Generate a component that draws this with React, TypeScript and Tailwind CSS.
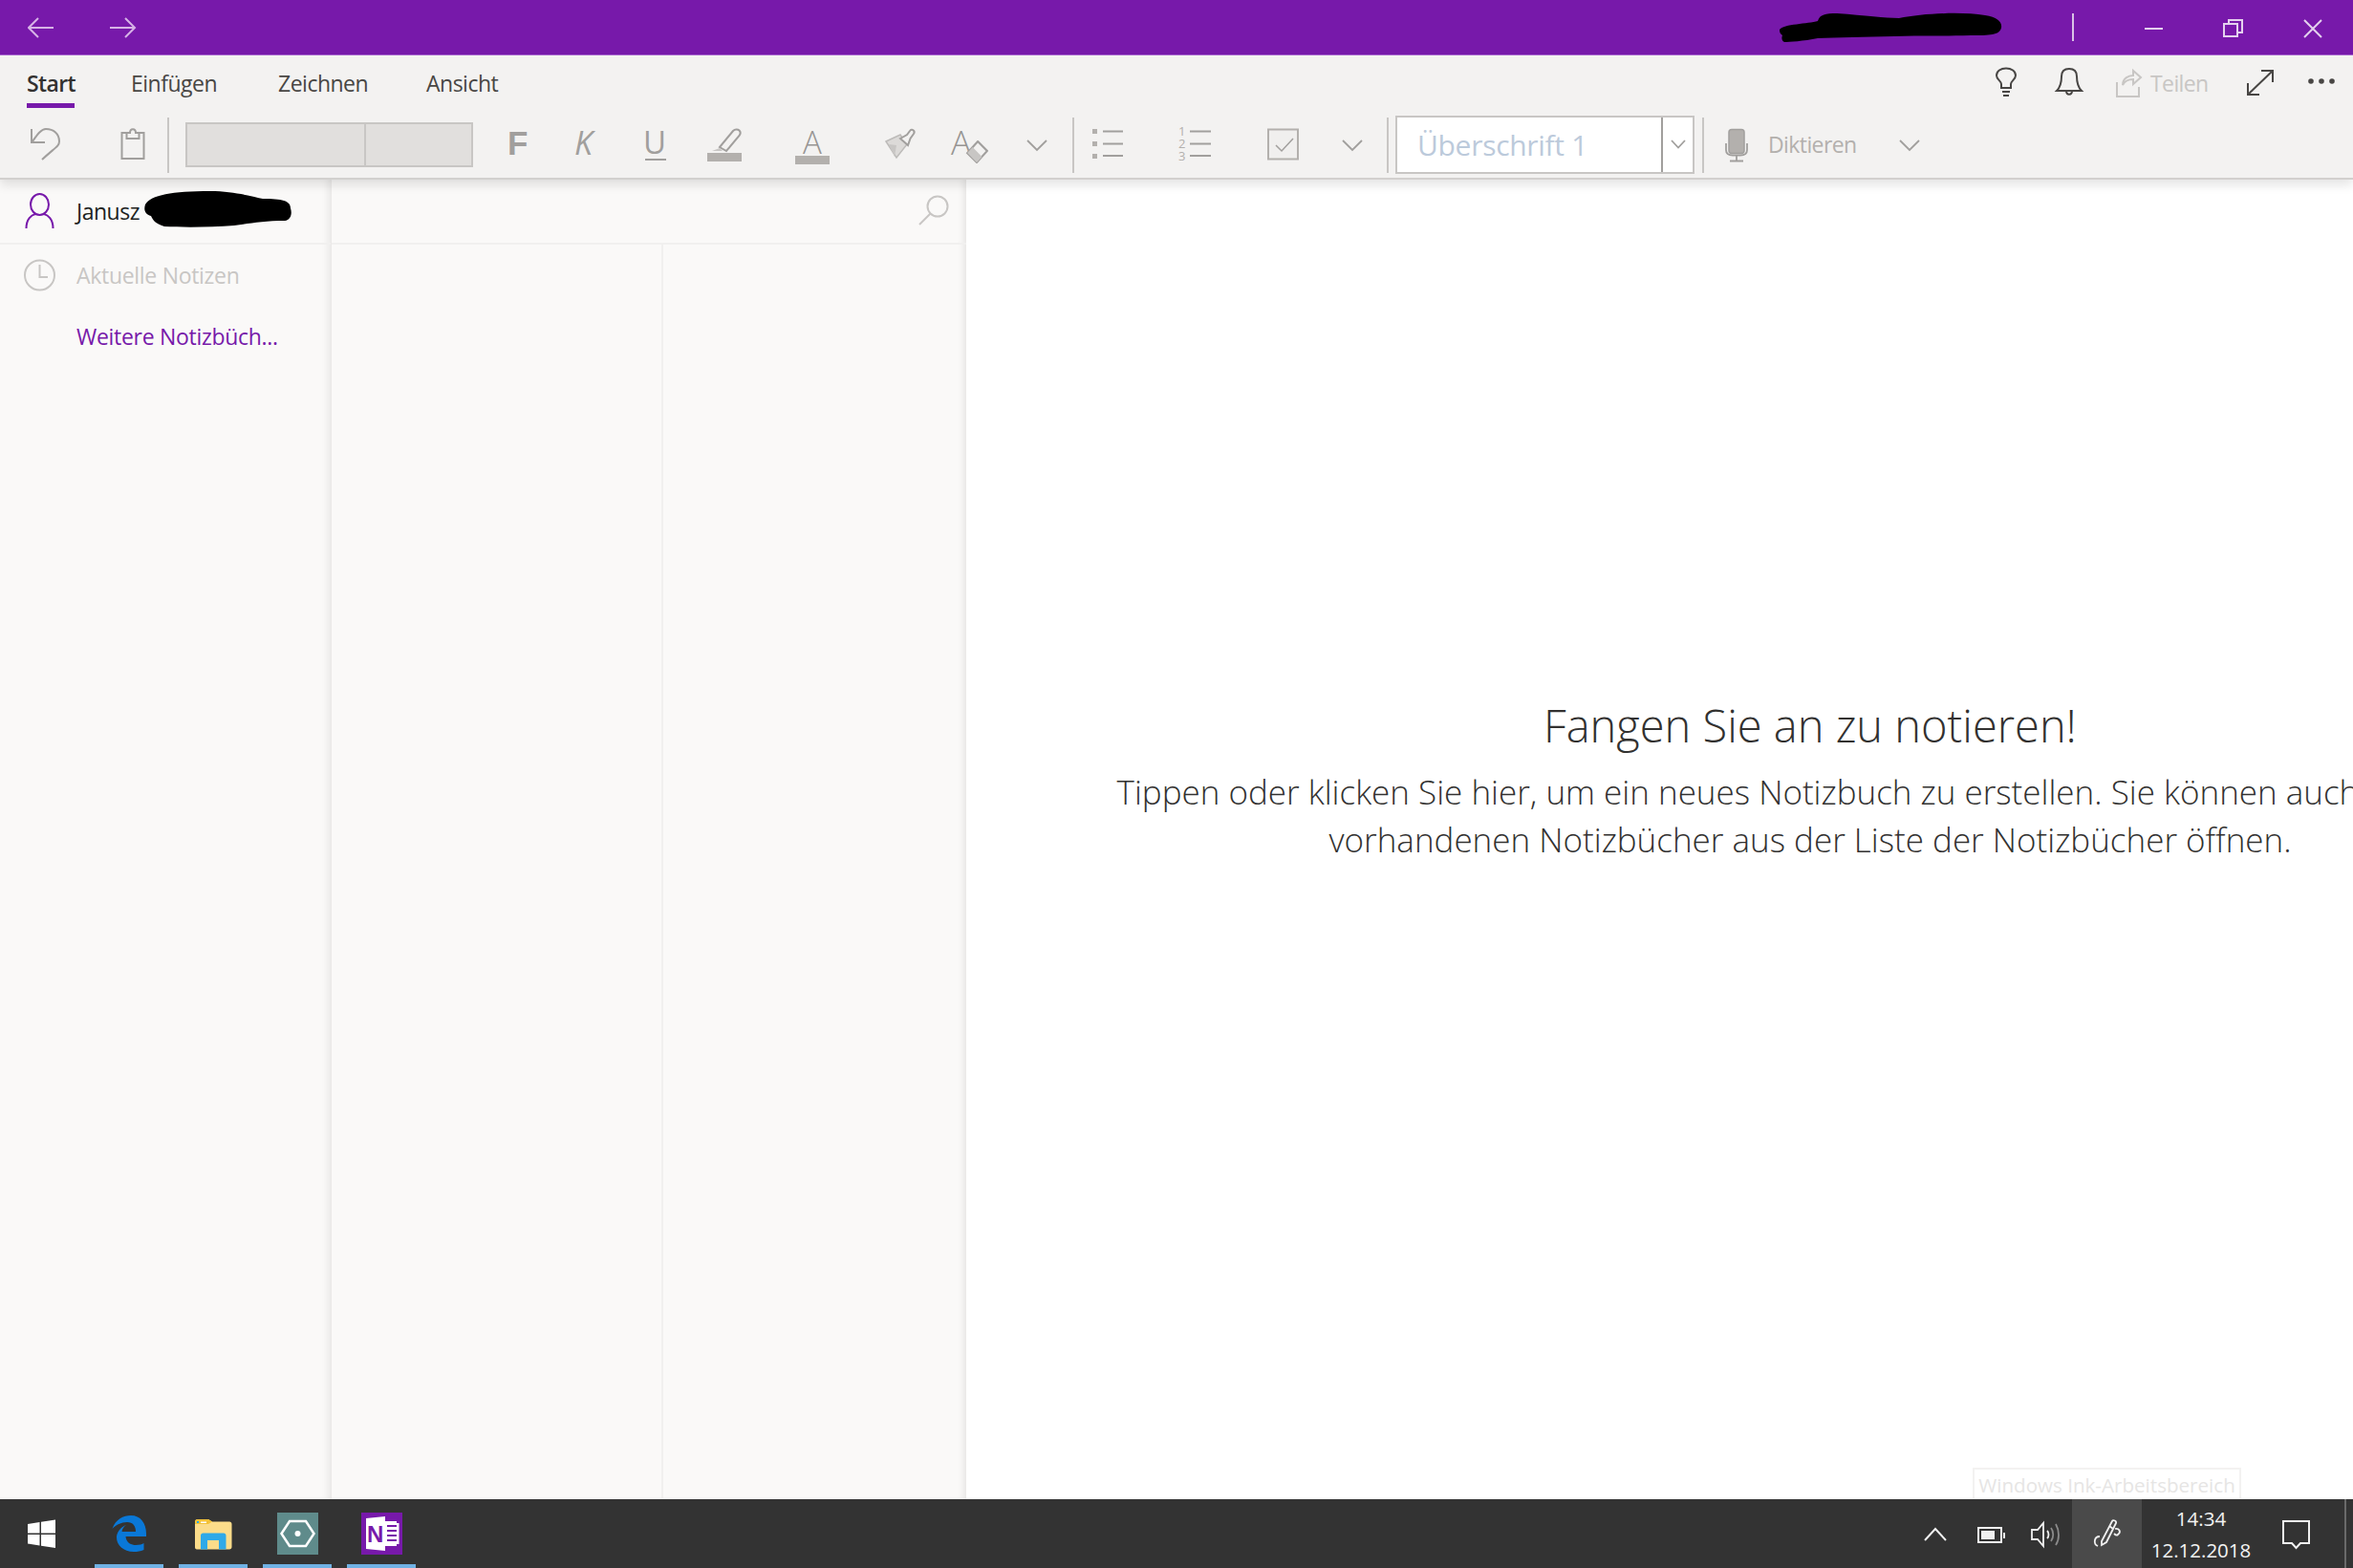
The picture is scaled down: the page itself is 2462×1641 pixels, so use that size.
import React from "react";

const UI = "'Open Sans','Noto Sans',sans-serif";
const G = "#a19f9d";

function Ico({ x, y, w, h, className = "", children }: { x: number; y: number; w: number; h: number; className?: string; children: React.ReactNode }) {
  return (
    <svg width={w} height={h} viewBox={`${x} ${y} ${w} ${h}`} fill="none" className={`shrink-0 block ${className}`}>
      {children}
    </svg>
  );
}

const Chev = ({ x, className = "" }: { x: number; className?: string }) => (
  <Ico x={x} y={132} w={22} h={40} className={className}>
    <path d={`M${x + 1} 147 L${x + 11} 157 L${x + 21} 147`} stroke={G} strokeWidth="1.8" />
  </Ico>
);

const Sep = ({ className = "" }: { className?: string }) => <div className={`w-[2px] h-[58px] bg-[#c8c6c4] shrink-0 ${className}`} />;

export default function App() {
  return (
    <div className="w-full h-screen overflow-hidden flex flex-col bg-white" style={{ fontFamily: UI }}>
      {/* Title bar */}
      <div className="h-[58px] shrink-0 bg-[#7719aa] border-b border-[#a865cf] flex items-center">
        <Ico x={29} y={14} w={114} h={28} className="ml-[29px]">
          <g stroke="#d6b3e6" strokeWidth="2" fill="none">
            <path d="M56 28 H30 M40 18 L30 28 L40 38" />
            <path d="M115 28 H141 M131 18 L141 28 L131 38" />
          </g>
        </Ico>
        <svg width="233" height="32" viewBox="0 0 233 32" className="ml-[1719px] shrink-0 block">
          <path d="M0 18 C4 12 30 12 40 9 C42 2 48 1 60 1 C90 3 110 6 125 6 C150 1 190 -1 215 3 C228 5 233 10 232 16 C230 24 220 24 200 24 C170 25 150 24 120 25 C90 26 60 26 40 27 C25 30 10 31 5 31 C2 30 2 26 3 24 C0 22 0 20 0 18 Z" fill="#000" />
        </svg>
        <div className="ml-[73px] w-[2px] h-[29px] bg-[#d9c2e6] shrink-0" />
        <Ico x={2240} y={14} w={200} h={28} className="ml-[68px]">
          <g stroke="#e4d1ee" strokeWidth="2" fill="none">
            <path d="M2246 29 H2265" />
            <path d="M2329 24 H2343 V37 H2329 Z M2334 24 V20 H2348 V33 H2343" />
            <path d="M2413 20 L2431 38 M2431 20 L2413 38" />
          </g>
        </Ico>
      </div>

      {/* Ribbon */}
      <div className="relative z-10 h-[130px] shrink-0 bg-[#f3f2f1] border-b-2 border-[#d2d0ce] shadow-[0_6px_10px_rgba(0,0,0,0.10)] flex flex-col">
        <div className="h-[58px] flex items-start text-[23px] leading-[30px] text-[#484644]">
          <div className="ml-[28px] w-[50px] flex flex-col mt-[14px]">
            <span className="font-semibold whitespace-nowrap text-[#323130] tracking-[-0.6px]">Start</span>
            <div className="mt-[6px] h-[5px] bg-[#7719aa]" />
          </div>
          <span className="ml-[59px] w-[91px] mt-[14px] whitespace-nowrap tracking-[-0.5px]">Einfügen</span>
          <span className="ml-[63px] w-[94px] mt-[14px] whitespace-nowrap tracking-[-0.5px]">Zeichnen</span>
          <span className="ml-[61px] w-[76px] mt-[14px] whitespace-nowrap tracking-[-0.5px]">Ansicht</span>
          <Ico x={2085} y={58} w={97} h={58} className="ml-[1563px]">
            <g stroke="#484644" strokeWidth="2" fill="none">
              <path d="M2094 92 V88 C2094 85 2089 83 2089 79 C2089 74.500 2093.500 71.500 2099 71.500 C2104.500 71.500 2109 74.500 2109 79 C2109 83 2104 85 2104 88 V92 Z M2095 96 H2103 M2096 100 H2102" />
              <path d="M2152 95 C2156 91 2157 87 2157 80 C2157 75 2160 72 2165 72 C2170 72 2173 75 2173 80 C2173 87 2174 91 2178 95 Z M2162 95 C2162 100 2168 100 2168 95" />
            </g>
          </Ico>
          <Ico x={2215} y={70} w={28} h={34} className="ml-[32px] mt-[12px]">
            <g stroke="#c8c6c4" strokeWidth="2" fill="none">
              <path d="M2216 86 V101 H2239 V91" />
              <path d="M2222 89 C2222 82 2228 79 2233 79 V74 L2241 81 L2233 88 V83 C2228 83 2224 85 2222 89 Z" />
            </g>
          </Ico>
          <span className="ml-[8px] w-[60px] mt-[14px] text-[#c8c6c4] whitespace-nowrap tracking-[-0.6px]">Teilen</span>
          <Ico x={2350} y={58} w={94} h={58} className="ml-[40px]">
            <g stroke="#484644" strokeWidth="2" fill="none">
              <path d="M2352 99 L2378 74 M2366 74 H2378 V86 M2352 87 V99 H2364" />
            </g>
            <g fill="#484644">
              <circle cx="2418" cy="85" r="2.800" />
              <circle cx="2429" cy="85" r="2.800" />
              <circle cx="2440" cy="85" r="2.800" />
            </g>
          </Ico>
        </div>
        <div className="h-[72px] -mb-[2px] flex items-start">
          <div className="h-[72px] flex items-center">
            <Ico x={31} y={132} w={33} h={40} className="ml-[31px]">
              <g stroke={G} strokeWidth="2" fill="none">
                <path d="M33 135 V149 H47" />
                <path d="M34 148 C39 141 43 135 48 135 C56 135 62 140 62 148 C62 153 58 154 44 167" />
              </g>
            </Ico>
            <Ico x={126} y={132} w={27} h={40} className="ml-[62px]">
              <g stroke={G} strokeWidth="2" fill="none">
                <path d="M133 139 H127.500 V166 H150.500 V139 H145" />
                <path d="M132.500 145 V139 H136 C136 134 142 134 142 139 H145.500 V145 Z" />
              </g>
            </Ico>
            <Sep className="ml-[22px]" />
            <div className="ml-[17px] w-[301px] h-[47px] -mt-[2px] bg-[#e1dfdd] border-2 border-[#c8c6c4] flex shrink-0">
              <div className="w-[187px] h-full border-r-2 border-[#c8c6c4]" />
            </div>
            <span className="ml-[36px] w-[20px] shrink-0 text-[35px] leading-[40px] font-bold text-[#a19f9d] -translate-y-[2px]" style={{ fontFamily: "'Liberation Sans',sans-serif" }}>F</span>
            <span className="ml-[50px] w-[24px] shrink-0 text-[34px] leading-[40px] italic text-[#a19f9d] -translate-y-[3px]">K</span>
            <div className="relative ml-[48px] w-[27px] h-[40px] shrink-0">
              <span className="block text-[33px] leading-[40px] text-[#a19f9d] -translate-y-[3px]">U</span>
              <div className="absolute left-[2px] top-[34px] w-[22px] h-[2px] bg-[#a19f9d]" />
            </div>
            <Ico x={738} y={132} w={40} h={40} className="ml-[38px]">
              <rect x="740" y="160" width="36" height="9" fill="#b3b0ad" />
              <path d="M753 154 L767 137 C769 135 772 135 773.500 136.500 C775 138 775 140 773.500 142 L760 158 Z" stroke={G} strokeWidth="2" />
              <path d="M753 155 L745 158 H756 Z" fill="#c8c6c4" />
            </Ico>
            <div className="ml-[54px] w-[36px] h-[37px] mt-[2px] flex flex-col items-center shrink-0">
              <span className="text-[33px] leading-[28px] font-light text-[#979593]">A</span>
              <div className="mt-auto w-full h-[9px] bg-[#b3b0ad]" />
            </div>
            <Ico x={924} y={132} w={36} h={40} className="ml-[56px]">
              <path d="M927 148 L942 141 L949 151 L938 165 Z" fill="#dcdad8" stroke="#bdbbb9" strokeWidth="1.500" />
              <path d="M942 145 L949 141 L952 137 C954 134 958 137 956 140 L952.500 145 L950 152 Z" stroke={G} strokeWidth="2" fill="#f3f2f1" />
              <path d="M938 152 L936 164 L930 151 Z" fill="#c8c6c4" />
            </Ico>
            <div className="ml-[35px] w-[38px] h-[40px] flex items-start shrink-0 relative">
              <span className="text-[35px] leading-[32px] font-light text-[#979593] mt-[1px]">A</span>
              <svg width="24" height="24" viewBox="0 0 22 22" fill="none" className="absolute right-[-1px] bottom-[1px]">
                <path d="M12 1 L21 10 L11 21 L2 12 Z" fill="#f3f2f1" stroke={G} strokeWidth="2" />
                <path d="M2 12 L7 6.500 L16 15.500 L11 21 Z" fill="#c8c6c4" />
              </svg>
            </div>
            <Chev x={1074} className="ml-[41px]" />
            <Sep className="ml-[26px]" />
            <Ico x={1143} y={132} w={33} h={40} className="ml-[19px]">
              <g fill="#b3b0ad">
                <rect x="1143" y="135" width="5" height="5" />
                <rect x="1143" y="148" width="5" height="5" />
                <rect x="1143" y="161" width="5" height="5" />
              </g>
              <path d="M1154 137.500 H1175 M1154 150.500 H1175 M1154 163 H1175" stroke={G} strokeWidth="2" />
            </Ico>
            <div className="ml-[57px] w-[12px] -mt-[4px] flex flex-col text-[13px] leading-[13px] text-[#b3b0ad] shrink-0">
              <span>1</span>
              <span>2</span>
              <span>3</span>
            </div>
            <Ico x={1245} y={132} w={24} h={40}>
              <path d="M1245 137.500 H1267 M1245 150.500 H1267 M1245 163 H1267" stroke={G} strokeWidth="2" />
            </Ico>
            <Ico x={1326} y={132} w={34} h={40} className="ml-[57px]">
              <rect x="1327" y="135.500" width="31" height="31" stroke="#b3b0ad" strokeWidth="2" fill="#f0efee" />
              <path d="M1335 152 L1341 158 L1353 145" stroke={G} strokeWidth="1.500" />
            </Ico>
            <Chev x={1404} className="ml-[44px]" />
            <Sep className="ml-[25px]" />
            <div className="ml-[7px] w-[313px] h-[61px] -mt-[2px] bg-white border-2 border-[#c8c6c4] flex shrink-0">
              <span className="ml-[21px] w-[255px] text-[30px] leading-[57px] text-[#bccadb] whitespace-nowrap tracking-[-0.3px]">Überschrift 1</span>
              <div className="border-l-2 border-[#a19f9d] flex-1 flex items-center justify-center">
                <svg width="16" height="10" viewBox="0 0 16 10" fill="none"><path d="M1 1 L8 8.500 L15 1" stroke={G} strokeWidth="1.800" /></svg>
              </div>
            </div>
            <Sep className="ml-[8px]" />
            <Ico x={1803} y={132} w={28} h={40} className="ml-[20px]">
              <rect x="1809" y="135.500" width="16" height="25" rx="3" fill="#b3b0ad" stroke={G} strokeWidth="1.500" />
              <path d="M1806 150 V157 C1806 161 1809 162.500 1813 162.500 H1821 C1825 162.500 1828 161 1828 157 V150 M1817 163 V168 M1810 168.500 H1824" stroke={G} strokeWidth="1.800" />
            </Ico>
            <span className="ml-[19px] w-[93px] -mt-[3px] text-[23px] leading-[30px] text-[#b3b0ad] whitespace-nowrap tracking-[-0.6px] shrink-0">Diktieren</span>
            <Chev x={1987} className="ml-[44px]" />
          </div>
        </div>
      </div>

      {/* Body */}
      <div className="flex-1 flex min-h-0">
        <aside className="w-[347px] shrink-0 bg-[#faf9f8] border-r border-[#ebe9e8] shadow-[inset_-7px_0_7px_-4px_rgba(0,0,0,0.07)] flex flex-col">
          <div className="h-[68px] shrink-0 border-b-2 border-[#f1f0ef] flex items-center relative">
            <Ico x={25} y={200} w={34} h={40} className="ml-[25px]">
              <g stroke="#7719aa" strokeWidth="2" fill="none">
                <ellipse cx="41.500" cy="213" rx="9.500" ry="11" />
                <path d="M27.500 238 C27.500 228 33 224 37 223 M55.500 238 C55.500 228 50 224 46 223" />
              </g>
            </Ico>
            <span className="ml-[21px] text-[23px] leading-[30px] text-[#201f1e] whitespace-nowrap tracking-[-0.5px]">Janusz</span>
            <svg width="156" height="38" viewBox="0 0 156 38" className="absolute left-[150px] top-[12px]">
              <path d="M2 14 C8 4 30 0 70 0 C95 0 115 6 125 8 C145 8 154 10 154 18 C156 24 154 30 148 31 C125 31 110 34 95 36 C70 38 40 38 22 37 C12 34 10 30 8 26 C2 24 0 20 2 14 Z" fill="#000" />
            </svg>
          </div>
          <div className="mt-[15px] h-[34px] flex items-center">
            <Ico x={24} y={271} w={36} h={34} className="ml-[24px]">
              <circle cx="41.500" cy="288" r="15.500" stroke="#c8c6c4" strokeWidth="2" />
              <path d="M41.500 277 V290 H50" stroke="#c8c6c4" strokeWidth="2" />
            </Ico>
            <span className="ml-[20px] text-[23px] leading-[30px] text-[#c8c6c4] whitespace-nowrap tracking-[-0.3px]">Aktuelle Notizen</span>
          </div>
          <span className="ml-[80px] mt-[30px] text-[23px] leading-[34px] text-[#7719aa] whitespace-nowrap tracking-[-0.3px]">Weitere Notizbüch...</span>
        </aside>

        <section className="w-[664px] shrink-0 bg-[#faf9f8] shadow-[inset_-7px_0_7px_-4px_rgba(0,0,0,0.08)] flex flex-col">
          <div className="h-[68px] shrink-0 border-b-2 border-[#f1f0ef] flex items-center justify-end pr-[18px]">
            <svg width="34" height="34" viewBox="0 0 34 34" fill="none">
              <circle cx="22" cy="12" r="10.500" stroke="#c8c6c4" strokeWidth="2" />
              <path d="M14.500 19.500 L3 31" stroke="#c8c6c4" strokeWidth="2" />
            </svg>
          </div>
          <div className="flex-1 flex">
            <div className="w-[347px] border-r-2 border-[#f1f0ef]" />
          </div>
        </section>

        <main className="relative flex-1 bg-white overflow-hidden">
          <div className="w-[1766px] pt-[541px] flex flex-col items-center text-center text-[#323130]">
            <h1 className="text-[47px] leading-[60px] font-light whitespace-nowrap">Fangen Sie an zu notieren!</h1>
            <p className="mt-[15px] text-[35px] leading-[50px] font-light whitespace-nowrap">
              Tippen oder klicken Sie hier, um ein neues Notizbuch zu erstellen. Sie können auch <span className="tracking-[-1px]">eine Ihrer</span>
              <br />
              vorhandenen Notizbücher aus der Liste der Notizbücher öffnen.
            </p>
          </div>
          <div className="absolute bottom-0 right-[117px] w-[281px] h-[33px] border-2 border-b-0 border-[#f3f2f1] flex items-center justify-center text-[20.6px] leading-[30px] text-[#e6e5e4] whitespace-nowrap">
            Windows Ink-Arbeitsbereich
          </div>
        </main>
      </div>

      {/* Taskbar */}
      <div className="h-[72px] shrink-0 bg-[#333333] flex items-stretch">
        <Ico x={29} y={1569} w={30} h={72} className="ml-[29px]">
          <g fill="#fff">
            <path d="M29 1595 L41.500 1593 V1604.500 H29 Z" />
            <path d="M43 1592.800 L58 1590.500 V1604.500 H43 Z" />
            <path d="M29 1606 H41.500 V1617.500 L29 1615.500 Z" />
            <path d="M43 1606 H58 V1620 L43 1617.800 Z" />
          </g>
        </Ico>
        <div className="ml-[40px] w-[72px] border-b-4 border-[#6fb1e4] flex items-center justify-center">
          <svg width="36" height="38" viewBox="0 0 36 38" className="mt-[4px]">
            <path d="M0.500 14 C4 4 12 0 20 0 C30 0 36 8 36 19 V22 H14.500 C15 29 21 31 25 31 C29 31 32 30 33.500 29 V36 C30 37.500 27 38 23 38 C12 38 5 31 5 23 C5 18 9 12 15 10 C12 12 11 14 10.500 17 H25 C25 11 22 7 16 7 C10 7 4 10 0.500 14 Z" fill="#0a78d7" />
          </svg>
        </div>
        <div className="ml-[16px] w-[72px] border-b-4 border-[#6fb1e4] flex items-center justify-center">
          <svg width="40" height="33" viewBox="0 0 40 33" className="mt-[4px]">
            <path d="M1 4 C1 2 2 1 4 1 H15 L19 3.500 H37 C38.500 3.500 39.500 4.500 39.500 6 V30 C39.500 31.500 38.500 32.500 37 32.500 H3 C1.500 32.500 1 31.500 1 30 Z" fill="#fbdc8a" />
            <path d="M1 4 C1 2 2 1 4 1 H15 L19 3.500 L15 6 H1 Z" fill="#f2c138" />
            <rect x="3" y="3" width="2" height="2" fill="#2aa8e6" />
            <rect x="7" y="3.500" width="6" height="1.500" fill="#fff" />
            <path d="M7 32.500 V18 C7 16.500 8 15.500 9.500 15.500 H31 C32.500 15.500 33.500 16.500 33.500 18 V32.500 H26 V23 H14 V32.500 Z" fill="#2fa9e8" />
          </svg>
        </div>
        <div className="ml-[16px] w-[72px] border-b-4 border-[#6fb1e4] flex items-center justify-center">
          <svg width="43" height="44" viewBox="0 0 43 44" className="mt-[4px]">
            <rect width="43" height="44" fill="#5f8b8b" />
            <path d="M13 9 H30 L38.500 22 L30 35 H13 L4.500 22 Z" fill="none" stroke="#fff" strokeWidth="2.500" />
            <circle cx="21.500" cy="22" r="3" fill="#fff" />
          </svg>
        </div>
        <div className="ml-[16px] w-[72px] border-b-4 border-[#6fb1e4] flex items-center justify-center">
          <svg width="43" height="44" viewBox="0 0 43 44" className="mt-[4px]">
            <rect width="43" height="44" fill="#7719aa" />
            <path d="M5 6 L25 4 V40 L5 38 Z" fill="#fff" />
            <rect x="25" y="9" width="12" height="26" fill="#fff" />
            <rect x="37" y="11" width="2.500" height="22" fill="#fff" />
            <path d="M27 14 H37 M27 19 H37 M27 24 H37 M27 29 H37" stroke="#7719aa" strokeWidth="2" />
            <text x="6" y="31" fontFamily="'Liberation Sans',sans-serif" fontWeight="700" fontSize="24" fill="#7719aa">N</text>
          </svg>
        </div>
        <Ico x={2010} y={1569} w={150} h={72} className="ml-[1575px]">
          <g stroke="#f0f0f0" strokeWidth="2" fill="none">
            <path d="M2014 1612 L2025 1600 L2036 1612" />
            <rect x="2070" y="1599" width="24" height="15" />
            <path d="M2097 1604 V1610" />
            <path d="M2126 1601 H2132 L2138 1594 V1618 L2132 1611 H2126 Z" strokeWidth="1.800" />
            <path d="M2142 1602 C2144 1604 2144 1608 2142 1610" strokeWidth="1.800" />
          </g>
          <rect x="2073" y="1602" width="14" height="9" fill="#f0f0f0" />
          <path d="M2146 1599 C2149 1603 2149 1609 2146 1613 M2151 1595 C2155 1602 2155 1611 2151 1617" stroke="#8a8a8a" strokeWidth="1.800" fill="none" />
        </Ico>
        <div className="ml-[8px] w-[73px] bg-[#4a4a4a] flex items-center justify-center">
          <svg width="32" height="32" viewBox="0 0 32 32" fill="none" stroke="#f0f0f0" strokeWidth="1.800">
            <path d="M10 24 L21 3 C22 1 26 3 25 5 L15 25 L10 28 Z M18 8 L22 11" />
            <path d="M24 11 C28 10 31 14 27 17 C26 18 24 17 23 16" />
            <path d="M8 19 C2 19 1 27 6 29" />
          </svg>
        </div>
        <div className="w-[124px] pt-[2px] flex flex-col items-center justify-center text-[20.5px] leading-[33px] text-[#f3f3f3]">
          <span>14:34</span>
          <span>12.12.2018</span>
        </div>
        <Ico x={2385} y={1569} w={36} h={72} className="ml-[20px]">
          <path d="M2389 1592 H2416 V1615 H2407 L2402.500 1620 L2398 1615 H2389 Z" stroke="#f0f0f0" strokeWidth="2" fill="none" />
        </Ico>
        <div className="ml-[32px] w-[2px] bg-[#6a6a6a]" />
      </div>
    </div>
  );
}
